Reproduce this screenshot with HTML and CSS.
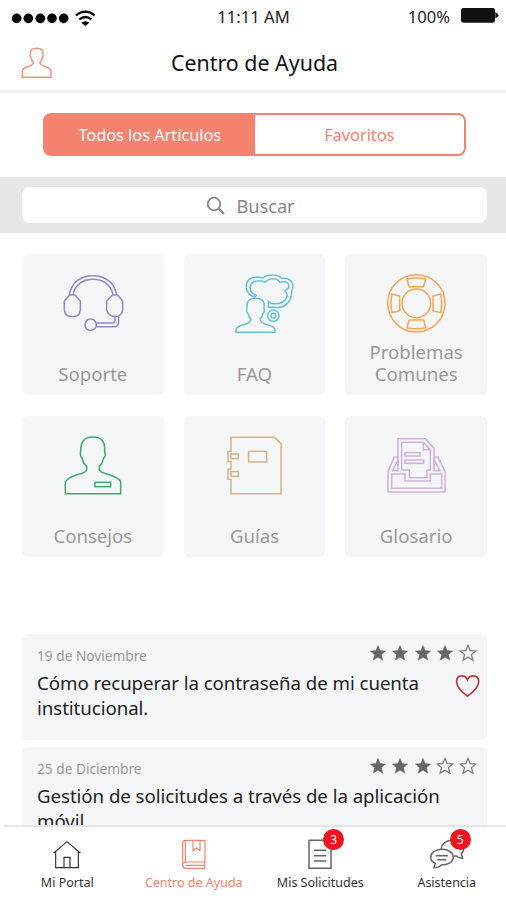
FILE: index.html
```html
<!DOCTYPE html>
<html lang="es">
  <head>
    <meta charset="UTF-8" />
    <meta name="viewport" content="width=device-width, initial-scale=1.0" />
    <title>Centro de Ayuda</title>
    <link rel="stylesheet" href="styles.css">
  </head>
  <body>
    <svg class="defs" width="0" height="0">
      <symbol id="star" viewBox="0 0 24 24">
        <path d="M12 1.8l2.9 7 7.4.5-5.7 4.9 1.9 7.4-6.5-4.1-6.5 4.1 1.9-7.4-5.7-4.9 7.4-.5z" />
      </symbol>
    </svg>
    <div class="app">
      <div class="status-bar">
        <svg class="signal" viewBox="36 24 255 60">
          <circle cx="50" cy="55" r="14.5" />
          <circle cx="85" cy="55" r="14.5" />
          <circle cx="121" cy="55" r="14.5" />
          <circle cx="156" cy="55" r="14.5" />
          <circle cx="191" cy="55" r="14.5" />
          <path class="wave" d="M228 46Q256 24 284 46M238 58Q256 44 274 58" />
          <path d="M244 68Q256 59 268 68L256 78z" />
        </svg>
        <span class="time">11:11 AM</span>
        <span class="battery">
          100%
          <svg viewBox="1380 21 117 51">
            <rect x="1383" y="24" width="102" height="44" rx="7" />
            <path d="M1486 37q9 3 9 9t-9 9z" />
          </svg>
        </span>
      </div>

      <header class="header">
        <svg class="user-icon" viewBox="60 138 102 102">
          <path d="M67 232V212Q69 205 81 201Q100 196 100 187Q94 182 93 173Q89 169 91 162Q89 145 110 145Q131 145 129 162Q131 169 127 173Q126 182 120 187Q120 196 139 201Q151 205 153 212V232z" />
        </svg>
        <h1>Centro de Ayuda</h1>
      </header>

      <div class="segments">
        <button class="segment active">Todos los Artículos</button>
        <button class="segment">Favoritos</button>
      </div>

      <div class="search-bar">
        <div class="search-field">
          <svg viewBox="0 0 20 20">
            <circle cx="8" cy="8" r="6.3" />
            <path class="handle" d="M12.7 12.7L18 18" />
          </svg>
          <span>Buscar</span>
        </div>
      </div>

      <main class="content">
        <div class="grid">
          <div class="card">
            <svg class="support" viewBox="124 72 216 192">
              <path d="M161 150C167 112 195 92 232 92S297 112 303 150M172 150C177 119 202 103 232 103S287 119 292 150" />
              <path d="M162 150h16l16 18v28q-2 19-24 19t-24-19v-28z" />
              <path d="M290 150h16l15 18v28q-2 12-14 18h-16q-13-4-18-18v-28z" />
              <path d="M309 214v16q0 15-15 15h-52M298 214v14q0 6-7 6h-49" />
              <circle cx="225" cy="239" r="17" />
            </svg>
            <p>Soporte</p>
          </div>
          <div class="card">
            <svg class="faq" viewBox="130 72 216 192">
              <path d="M184 262V253Q187 245 205 240Q229 234 229 222Q221 216 220 205Q214 201 217 190Q213 160 243 160T268 190Q271 201 265 205Q264 216 256 222Q257 234 280 240Q299 245 301 253V262z" />
              <path d="M241 156Q217 151 215 128Q213 98 247 96Q260 98 265 99Q276 89 296 90Q313 90 320 100Q351 96 355 122Q355 132 351 139Q352 160 337 176Q324 189 305 187H281V170L291 176Q330 179 337 155Q340 148 331 137Q346 130 342 119Q338 107 316 112Q309 101 296 101Q281 101 271 112Q258 105 248 108Q228 109 226 128Q227 145 244 151z" />
              <circle cx="296" cy="212" r="17" />
              <circle cx="296" cy="212" r="7" />
            </svg>
            <p>FAQ</p>
          </div>
          <div class="card">
            <svg class="problems" viewBox="132 72 216 192">
              <circle cx="241" cy="175" r="86" />
              <circle cx="241" cy="175" r="43" />
              <path d="M213 102Q241 96 269 102L263 125H219z" />
              <path d="M213 248Q241 254 269 248L263 225H219z" />
              <path d="M168 147Q162 175 168 203L191 197V153z" />
              <path d="M314 147Q320 175 314 203L291 197V153z" />
            </svg>
            <p>Problemas Comunes</p>
          </div>
          <div class="card">
            <svg class="tips" viewBox="124 69 216 192">
              <path d="M149 257V222Q154 210 184 200Q213 193 213 185V176Q201 164 199 150Q193 146 195 130Q194 87 232 87T267 130Q272 146 264 150Q262 164 251 176V185Q252 193 280 200Q312 210 315 222V257z" />
              <rect x="238" y="223" width="47" height="13" />
            </svg>
            <p>Consejos</p>
          </div>
          <div class="card">
            <svg class="guides" viewBox="130 69 216 192">
              <path d="M169 88H300L319 107V257H169V214H160V183H169V161H160V130H169z" />
              <rect x="222" y="130" width="54" height="32" />
              <rect x="169" y="138" width="22" height="14" />
              <rect x="169" y="191" width="22" height="14" />
            </svg>
            <p>Guías</p>
          </div>
          <div class="card">
            <svg class="glossary" viewBox="132 69 216 192">
              <path d="M186 147V92H268L294 121V147H306L327 190V252H156V190L175 147H186V175" />
              <path d="M197 186V103H262L283 125V186H273V209H220V186z" />
              <path d="M262 103V125H283M294 147V188" />
              <path d="M167 198H207V219H283V198H317V241H167z" />
              <path d="M186 156L170 188H186zM294 156L312 188H294z" />
              <rect x="207" y="134" width="45" height="10" />
              <rect x="207" y="156" width="56" height="10" />
            </svg>
            <p>Glosario</p>
          </div>
        </div>

        <div class="articles">
          <article class="article">
            <div class="article-top">
              <span class="date">19 de Noviembre</span>
              <span class="stars">
                <svg class="on"><use href="#star" /></svg>
                <svg class="on"><use href="#star" /></svg>
                <svg class="on"><use href="#star" /></svg>
                <svg class="on"><use href="#star" /></svg>
                <svg><use href="#star" /></svg>
              </span>
            </div>
            <div class="article-body">
              <h2>Cómo recuperar la contraseña de mi cuenta institucional.</h2>
              <svg class="heart" viewBox="608 161 76 72">
                <path d="M646 228Q613 204 613 184Q613 166 629 166Q641 166 646 178Q651 166 663 166Q680 166 680 184Q680 204 646 228z" />
              </svg>
            </div>
          </article>
          <article class="article">
            <div class="article-top">
              <span class="date">25 de Diciembre</span>
              <span class="stars">
                <svg class="on"><use href="#star" /></svg>
                <svg class="on"><use href="#star" /></svg>
                <svg class="on"><use href="#star" /></svg>
                <svg><use href="#star" /></svg>
                <svg><use href="#star" /></svg>
              </span>
            </div>
            <div class="article-body">
              <h2>Gestión de solicitudes a través de la aplicación móvil.</h2>
            </div>
          </article>
        </div>
      </main>

      <nav class="tab-bar">
        <a class="tab">
          <span class="tab-icon">
            <svg viewBox="150 48 102 102">
              <path d="M161 99L201 65L241 99M167 95V143H235V95M192 143V112H210V143" />
            </svg>
          </span>
          Mi Portal
        </a>
        <a class="tab active">
          <span class="tab-icon">
            <svg viewBox="529 48 102 102">
              <path d="M613 61H553Q546 63 546 70V136Q547 144 555 145H612V126M613 61V126H555Q547 127 546 136M554 62V126M555 136H612M577 61V92L587 84L598 92V61" />
            </svg>
          </span>
          Centro de Ayuda
        </a>
        <a class="tab">
          <span class="tab-icon">
            <svg class="bold" viewBox="150 48 102 102">
              <path d="M168 61H234V145H168zM183 91H220M183 107H220M183 123H220" />
            </svg>
            <span class="badge">3</span>
          </span>
          Mis Solicitudes
        </a>
        <a class="tab">
          <span class="tab-icon">
            <svg class="bold" viewBox="529 48 102 102">
              <path d="M541 143L545 130Q531 124 531 112C531 97 547 88 566 88S599 98 599 112S583 135 563 135Q557 142 541 143zM547 107H583M551 119H578" />
              <path d="M562 87Q566 63 596 61Q629 64 630 84Q631 94 623 101L627 115Q614 114 608 108H600" />
            </svg>
            <span class="badge">5</span>
          </span>
          Asistencia
        </a>
      </nav>
    </div>
  </body>
</html>
```
FILE: styles.css
```css
* {
  box-sizing: border-box;
}
body {
  margin: 0;
  font-family: "Noto Sans", "Open Sans", sans-serif;
  background-color: #fff;
  color: #222;
}
h1,
h2,
p {
  margin: 0;
  font-weight: 400;
}
svg {
  display: block;
  fill: none;
  flex-shrink: 0;
}
.defs {
  position: absolute;
}
.app {
  display: flex;
  flex-direction: column;
  width: 506px;
  height: 900px;
  overflow: hidden;
}

/* status bar */
.status-bar {
  display: grid;
  grid-template-columns: 1fr auto 1fr;
  align-items: center;
  height: 34px;
  padding: 0 7px 0 12px;
  font-size: 16.6px;
  line-height: 34px;
}
.signal {
  width: 85px;
  height: 20px;
  margin-top: 2px;
  fill: #000;
}
.signal .wave {
  fill: none;
  stroke: #000;
  stroke-width: 7;
}
.time {
  margin-left: -4px;
}
.battery {
  display: flex;
  justify-content: flex-end;
  align-items: center;
  gap: 10px;
}
.battery svg {
  width: 39px;
  height: 17px;
  margin-top: -3px;
  fill: #111;
}

/* header */
.header {
  display: grid;
  grid-template-columns: 34px 1fr 34px;
  align-items: center;
  height: 59px;
  padding: 0 17px 0 20px;
  border-bottom: 3px solid #f1f1f1;
}
.user-icon {
  width: 34px;
  height: 34px;
  margin-top: 2px;
  stroke: #f5917f;
  stroke-width: 4.5;
}
.header h1 {
  font-size: 21.4px;
  line-height: 30px;
  text-align: center;
  color: #111;
  margin-top: 2px;
}

/* segments */
.segments {
  display: flex;
  height: 43px;
  margin: 20px 40px 21px 43px;
  border: 2px solid #f5836f;
  border-radius: 8px;
  background-color: #f5836f;
}
.segment {
  flex: 1;
  padding: 0;
  border: 0;
  border-radius: 0 6px 6px 0;
  background-color: #fff;
  color: #f5836f;
  font-family: inherit;
  font-size: 16.5px;
  letter-spacing: -0.1px;
}
.segment.active {
  border-radius: 6px 0 0 6px;
  background-color: #f5836f;
  color: #fff;
}

/* search */
.search-bar {
  height: 56px;
  padding: 10px 19px 10px 22px;
  background-color: #e7e7e7;
}
.search-field {
  display: flex;
  align-items: center;
  justify-content: center;
  gap: 10px;
  height: 36px;
  padding-top: 1px;
  padding-right: 8px;
  border-radius: 8px;
  background-color: #fff;
  color: #888;
  font-size: 18.2px;
}
.search-field svg {
  width: 20px;
  height: 20px;
  stroke: #888;
  stroke-width: 1.8;
}
.search-field .handle {
  stroke-width: 2.4;
}

/* categories */
.content {
  flex: 1;
  min-height: 0;
  overflow: hidden;
  padding: 21px 19px 0 22px;
}
.grid {
  display: grid;
  grid-template-columns: repeat(3, 1fr);
  gap: 21px 20px;
}
.card {
  display: flex;
  flex-direction: column;
  align-items: center;
  height: 141px;
  padding: 15px 20px 10px;
  border-radius: 6px;
  background-color: #f4f6f8;
}
.card svg {
  width: 72px;
  height: 64px;
  overflow: visible;
  stroke-width: 4.6;
}
.card p {
  margin-top: auto;
  font-size: 18.6px;
  line-height: 22px;
  text-align: center;
  color: #999;
}
.support {
  stroke: #8f8bcb;
}
.faq {
  stroke: #6bc0d5;
}
.problems {
  stroke: #f7a654;
}
.tips {
  stroke: #41aa70;
}
.guides {
  stroke: #d6b489;
}
.glossary {
  stroke: #cdb4dc;
}

/* articles */
.articles {
  display: flex;
  flex-direction: column;
  gap: 7px;
  margin-top: 77px;
}
.article {
  height: 105.5px;
  flex-shrink: 0;
  padding: 10px 10px 0 15px;
  border-radius: 6px;
  background-color: #f4f6f8;
}
.article-top {
  display: flex;
  justify-content: space-between;
  height: 26px;
}
.date {
  padding-top: 2px;
  font-size: 13.7px;
  line-height: 20px;
  color: #999;
}
.stars {
  display: flex;
  gap: 4.6px;
}
.stars svg {
  width: 18px;
  height: 18px;
  stroke: #777;
  stroke-width: 1.6;
}
.stars .on {
  fill: #666;
  stroke: #666;
  stroke-width: 0.5;
}
.article-body {
  display: flex;
  justify-content: space-between;
}
.article h2 {
  width: 410px;
  font-size: 18.7px;
  line-height: 25px;
  letter-spacing: -0.06px;
}
.heart {
  width: 25px;
  height: 24px;
  margin: 4px -3px 0 0;
  stroke: #c4303c;
  stroke-width: 5;
}

/* tab bar */
.tab-bar {
  display: grid;
  grid-template-columns: repeat(4, 126.5px);
  height: 75px;
  margin-left: 4px;
  border-top: 2px solid #e6e6e8;
}
.tab {
  display: flex;
  flex-direction: column;
  align-items: center;
  padding-top: 9px;
  font-size: 12.5px;
  line-height: 22px;
  color: #333;
  white-space: nowrap;
}
.tab.active {
  color: #f5836f;
}
.tab-icon {
  position: relative;
  height: 36px;
}
.tab-icon svg {
  width: 34px;
  height: 34px;
  stroke: currentColor;
  stroke-width: 3.5;
}
.tab-icon .bold {
  stroke: #666;
  stroke-width: 4.5;
}
.badge {
  position: absolute;
  top: -7px;
  left: 20px;
  width: 21px;
  height: 21px;
  border-radius: 50%;
  background-color: #ec1420;
  color: #fff;
  font-size: 12px;
  line-height: 21px;
  text-align: center;
}
```
